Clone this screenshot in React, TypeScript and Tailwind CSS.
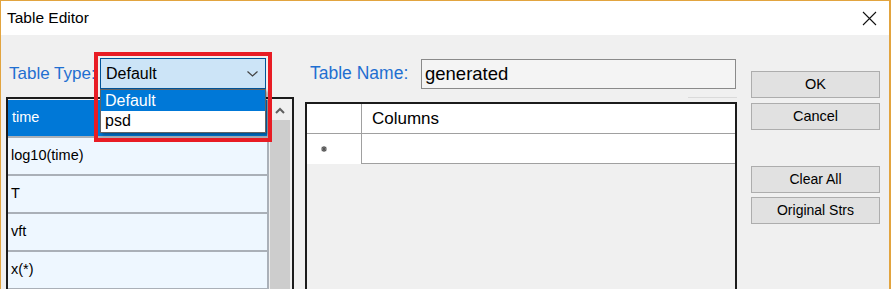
import React from "react";

function Chevron({ up = false }: { up?: boolean }) {
  return up ? (
    <svg width="10" height="7" viewBox="0 0 10 7">
      <path d="M1 6 L5 2 L9 6" fill="none" stroke="#606060" strokeWidth="2" />
    </svg>
  ) : (
    <svg width="11" height="6" viewBox="0 0 11 6">
      <path d="M0.5 0.5 L5.5 5 L10.5 0.5" fill="none" stroke="#444" strokeWidth="1.2" />
    </svg>
  );
}

const items = ["time", "log10(time)", "T", "vft", "x(*)"];

export default function App() {
  return (
    <div className="w-[891px] h-[289px] overflow-hidden bg-[#f0f0f0] border-l border-t border-r-2 border-[#e2a43f] flex flex-col font-['Liberation_Sans',Arial,sans-serif] text-black">
      <div className="h-[34px] shrink-0 bg-white flex items-center justify-between pl-[6px] pr-[12px]">
        <span className="text-[15.5px] leading-none">Table Editor</span>
        <svg width="15" height="15" viewBox="0 0 15 15">
          <path d="M1 1 L14 14 M14 1 L1 14" stroke="#111" strokeWidth="1.1" />
        </svg>
      </div>
      <div className="flex items-start flex-1">
        <div className="ml-[5px] w-[288px] shrink-0 flex flex-col pt-[23px]">
          <div className="flex items-center h-[31px]">
            <span className="ml-[3px] w-[91px] text-[17px] text-[#1f6fd1] leading-none">Table Type:</span>
            <div className="relative w-[166px] h-[31px]">
              <div className="w-full h-full bg-[#cce4f7] border border-[#005499] flex items-center justify-between pl-[5px] pr-[7px] text-[16px]">
                <span>Default</span>
                <Chevron />
              </div>
              <div className="absolute left-0 top-[31px] w-[166px] bg-white border border-[#646464] shadow-[2px_2px_3px_rgba(0,0,0,0.35)] z-10 text-[16px] pb-px">
                <div className="h-[21px] bg-[#0078d7] text-white flex items-center pl-[4px]">Default</div>
                <div className="h-[20px] flex items-center pl-[4px]">psd</div>
              </div>
              <div className="absolute -left-[6px] -top-[6px] w-[178px] h-[90px] border-4 border-[#e81c24] z-20 pointer-events-none" />
            </div>
          </div>
          <div className="mt-[8px] w-[288px] h-[200px] border-2 border-[#1b1b1b] flex">
            <div className="w-[261px] flex flex-col pt-px">
              {items.map((t, i) => (
                <div
                  key={t}
                  className={
                    i === 0
                      ? "h-[38px] shrink-0 border-b-2 border-r-2 border-[#aab0b8] flex items-center pl-[4px] text-[14.5px] bg-[#0078d7] text-white"
                      : "h-[38px] shrink-0 border-b-2 border-r-2 border-[#aab0b8] flex items-center pl-[3px] text-[14.5px] bg-[#eef7ff]"
                  }
                >
                  {t}
                </div>
              ))}
            </div>
            <div className="ml-px w-[20px] flex flex-col pt-px">
              <div className="h-[20px] flex items-center justify-center">
                <Chevron up />
              </div>
              <div className="flex-1 bg-[#cdcdcd]" />
            </div>
          </div>
        </div>

        <div className="ml-[11px] w-[432px] shrink-0 flex flex-col pt-[24px]">
          <div className="flex items-center h-[30px]">
            <span className="ml-[5px] w-[111px] text-[17.5px] text-[#1f6fd1] leading-none">Table Name:</span>
            <div className="w-[315px] h-[30px] border border-[#8a8a8a] bg-[#f4f4f4] pl-[3px] text-[18.5px] flex items-center">
              generated
            </div>
          </div>
          <div className="h-[13px] flex justify-end pt-[8px]">
            <div className="w-[49px] h-px bg-[#dadada]" />
          </div>
          <div className="h-[200px] border-2 border-[#1b1b1b] bg-[#f0f0f0] flex flex-col">
            <div className="flex h-[30px] bg-white">
              <div className="w-[55px] border-r border-b border-[#a0a0a0]" />
              <div className="flex-1 border-b border-[#a0a0a0] flex items-center pl-[10px] text-[17px]">Columns</div>
            </div>
            <div className="flex h-[30px]">
              <div className="w-[55px] bg-white border-r border-[#a0a0a0] flex items-center pl-[14px]">
                <svg width="6" height="6" viewBox="0 0 6 6">
                  <path d="M3 0 V6 M0 3 H6 M0.8 0.8 L5.2 5.2 M5.2 0.8 L0.8 5.2" stroke="#555" strokeWidth="1.2" />
                </svg>
              </div>
              <div className="flex-1 bg-white border-b border-[#a0a0a0]" />
            </div>
          </div>
        </div>

        <div className="ml-[14px] w-[129px] shrink-0 flex flex-col pt-[36px] text-[14.5px]">
          <div className="h-[27px] border border-[#adadad] bg-[#e1e1e1] flex items-center justify-center">OK</div>
          <div className="mt-[5px] h-[27px] border border-[#adadad] bg-[#e1e1e1] flex items-center justify-center">Cancel</div>
          <div className="mt-[36px] h-[27px] border border-[#adadad] bg-[#e1e1e1] flex items-center justify-center text-[14px]">Clear All</div>
          <div className="mt-[4px] h-[27px] border border-[#adadad] bg-[#e1e1e1] flex items-center justify-center text-[14px]">Original Strs</div>
        </div>
      </div>
    </div>
  );
}
